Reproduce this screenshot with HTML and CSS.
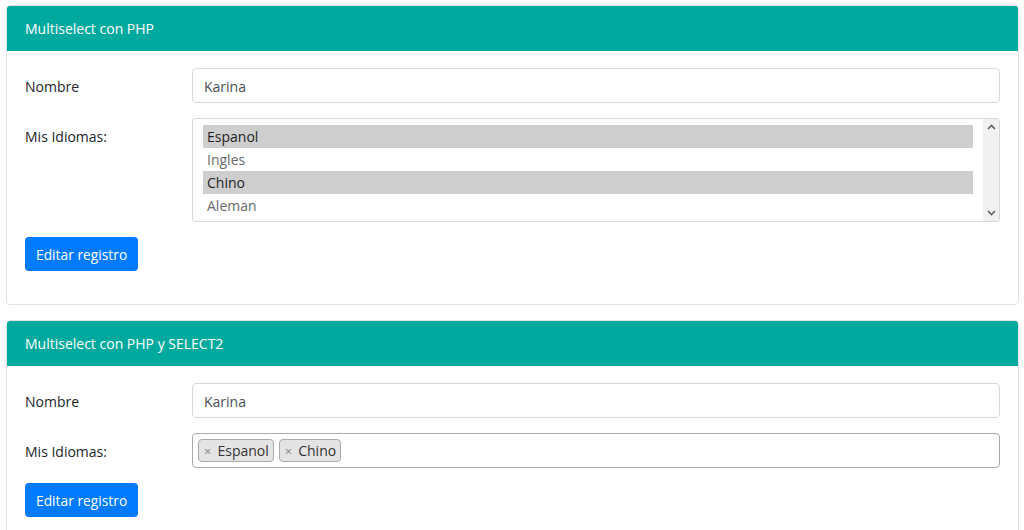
FILE: index.html
```html
<!DOCTYPE html>
<html lang="es">
  <head>
    <meta charset="UTF-8" />
    <meta name="viewport" content="width=device-width, initial-scale=1" />
    <title>Multiselect con PHP</title>
    <link rel="stylesheet" href="styles.css">
  </head>
  <body>
    <main class="page">
      <section class="card">
        <div class="card-header">Multiselect con PHP</div>
        <form class="card-body">
          <div class="form-row">
            <label class="form-label">Nombre</label>
            <div class="form-control">Karina</div>
          </div>
          <div class="form-row">
            <label class="form-label">Mis Idiomas:</label>
            <div class="multi-select">
              <ul class="options">
                <li class="selected">Espanol</li>
                <li>Ingles</li>
                <li class="selected">Chino</li>
                <li>Aleman</li>
              </ul>
              <div class="scrollbar">
                <svg width="9" height="6" viewBox="0 0 9 6"><path d="M1 5 L4.5 1.5 L8 5" fill="none" stroke="#606060" stroke-width="1.6"/></svg>
                <svg width="9" height="6" viewBox="0 0 9 6"><path d="M1 1 L4.5 4.5 L8 1" fill="none" stroke="#606060" stroke-width="1.6"/></svg>
              </div>
            </div>
          </div>
          <button type="button" class="btn">Editar registro</button>
        </form>
      </section>

      <section class="card">
        <div class="card-header">Multiselect con PHP y SELECT2</div>
        <form class="card-body">
          <div class="form-row">
            <label class="form-label">Nombre</label>
            <div class="form-control">Karina</div>
          </div>
          <div class="form-row">
            <label class="form-label">Mis Idiomas:</label>
            <div class="select2">
              <span class="tag"><span class="tag-x">×</span>Espanol</span>
              <span class="tag"><span class="tag-x">×</span>Chino</span>
            </div>
          </div>
          <button type="button" class="btn">Editar registro</button>
        </form>
      </section>
    </main>
  </body>
</html>
```

FILE: styles.css
```css
body {
  font-family: "Open Sans", "Noto Sans", sans-serif;
  font-size: 14px;
  color: #212529;
  margin: 0;
  padding: 0;
  background: #fff;
}

.page {
  padding: 5px 5px 0 6px;
  display: flex;
  flex-direction: column;
  gap: 15px;
}

.card {
  border: 1px solid #e2e2e2;
  border-radius: 4px;
  overflow: hidden;
}

.card-header {
  background-color: #00a99d;
  color: #fff;
  height: 45px;
  display: flex;
  align-items: center;
  padding: 0 18px;
  font-size: 14px;
}

.card-body {
  padding: 17px 18px 33px 18px;
  display: flex;
  flex-direction: column;
}

.form-row {
  display: flex;
  margin-bottom: 15px;
}

.form-label {
  width: 167px;
  flex-shrink: 0;
  height: 35px;
  box-sizing: border-box;
  padding-top: 1px;
  line-height: 35px;
}

.form-control {
  flex: 1;
  height: 35px;
  box-sizing: border-box;
  border: 1px solid #d6d9dc;
  border-radius: 4px;
  padding: 1px 11px 0;
  line-height: 33px;
  color: #495057;
}

.multi-select {
  flex: 1;
  height: 104px;
  box-sizing: border-box;
  border: 1px solid #d6d9dc;
  border-radius: 3px;
  display: flex;
}

.options {
  list-style: none;
  margin: 6px 10px 0 10px;
  padding: 0;
  flex: 1;
}

.options li {
  height: 23px;
  line-height: 23px;
  padding-left: 4px;
  color: #6a6a6a;
}

.options li.selected {
  background-color: #cecece;
  color: #1f1f1f;
}

.scrollbar {
  width: 16px;
  background-color: #f1f1f1;
  display: flex;
  flex-direction: column;
  justify-content: space-between;
  align-items: center;
  padding: 5px 0;
}

.select2 {
  flex: 1;
  height: 35px;
  box-sizing: border-box;
  border: 1px solid #aaa;
  border-radius: 4px;
  display: flex;
  align-items: center;
  gap: 5px;
  padding: 0 5px;
}

.tag {
  background-color: #e4e4e4;
  border: 1px solid #aaa;
  border-radius: 4px;
  height: 23px;
  box-sizing: border-box;
  padding: 1px 4px 0 5px;
  display: flex;
  align-items: center;
  color: #333;
  line-height: 1;
}

.tag-x {
  color: #888;
  margin-right: 6px;
  font-size: 13px;
}

.btn {
  align-self: flex-start;
  background-color: #007bff;
  color: #fff;
  border: none;
  border-radius: 4px;
  height: 34px;
  padding: 1px 11px 0;
  font-family: inherit;
  font-size: 13.8px;
  cursor: pointer;
}
```
